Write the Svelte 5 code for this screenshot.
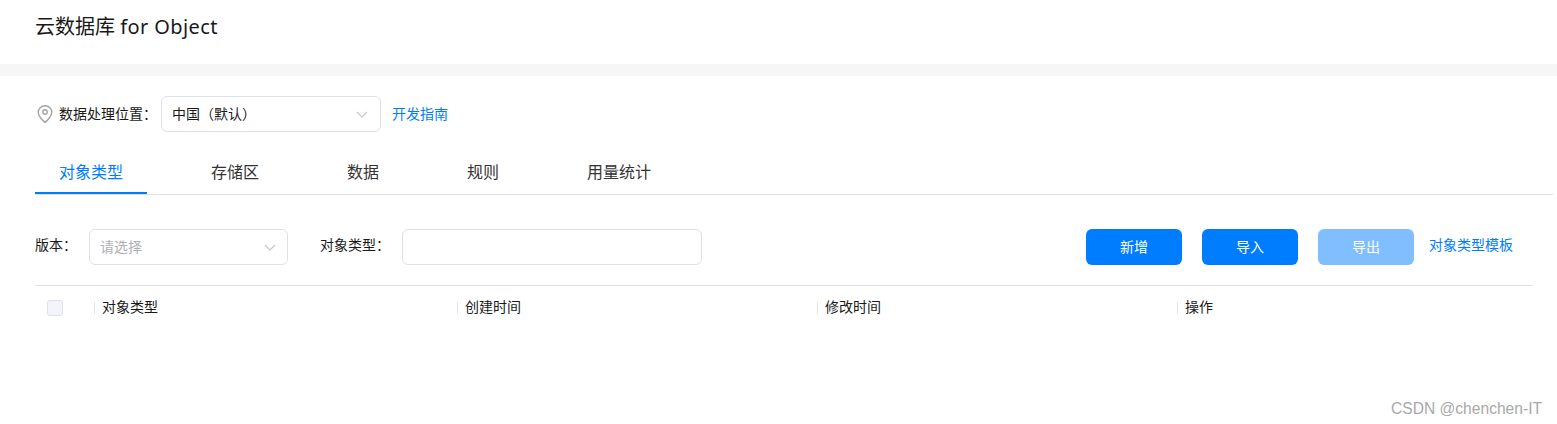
<script>
  const tabs = [
    { name: '对象类型', active: true },
    { name: '存储区' },
    { name: '数据' },
    { name: '规则' },
    { name: '用量统计' }
  ];
  const columns = [
    { name: '对象类型', width: 363 },
    { name: '创建时间', width: 360 },
    { name: '修改时间', width: 360 },
    { name: '操作', width: 300 }
  ];
</script>

<div class="page">
  <header class="title">云数据库 <span class="latin">for Object</span></header>
  <div class="band"></div>

  <div class="location">
    <svg class="pin" width="16" height="18" viewBox="0 0 16 18" fill="none" stroke="#a3a3a3" stroke-width="1.4">
      <path d="M8 .8C4.100.8 1.200 3.600 1.200 7.100c0 2.200 1.100 4.100 2.500 5.900 1.200 1.600 2.900 3.200 4.300 4.400 1.400-1.200 3.100-2.800 4.300-4.400 1.400-1.800 2.500-3.700 2.500-5.900C14.800 3.600 11.900.8 8 .8z" />
      <circle cx="8" cy="7" r="2.200" />
    </svg>
    <span class="loc-label">数据处理位置：</span>
    <div class="select loc-select">
      <span class="value">中国（默认）</span>
      <svg class="chev" width="12" height="7" viewBox="0 0 12 7" fill="none" stroke="#c4c6cc" stroke-width="1.100"><path d="M1 1l5 5 5-5" /></svg>
    </div>
    <a class="link guide" href="#guide">开发指南</a>
  </div>

  <nav class="tabs">
    {#each tabs as tab}
      <div class="tab" class:active={tab.active}>{tab.name}</div>
    {/each}
  </nav>

  <div class="toolbar">
    <span class="field-label">版本：</span>
    <div class="select ver-select">
      <span class="value placeholder">请选择</span>
      <svg class="chev" width="12" height="7" viewBox="0 0 12 7" fill="none" stroke="#c4c6cc" stroke-width="1.100"><path d="M1 1l5 5 5-5" /></svg>
    </div>
    <span class="field-label type-label">对象类型：</span>
    <input class="type-input" type="text" />
    <div class="actions">
      <button class="btn">新增</button>
      <button class="btn">导入</button>
      <button class="btn disabled">导出</button>
      <a class="link template" href="#template">对象类型模板</a>
    </div>
  </div>

  <div class="table-head">
    <span class="check"></span>
    {#each columns as col}
      <div class="col" style="width:{col.width}px">{col.name}</div>
    {/each}
  </div>

  <div class="watermark">CSDN @chenchen-IT</div>
</div>

<style>
  :global(body) { margin: 0; background: #fff; }
  .page {
    position: relative;
    height: 424px;
    overflow: hidden;
    font-family: "Noto Sans", "Noto Sans CJK SC", sans-serif;
    font-size: 14px;
    color: #191919;
  }
  .title { height: 64px; box-sizing: border-box; padding: 12px 0 0 35px; font-size: 20px; line-height: 30px; color: #191919; }
  .latin { letter-spacing: 0.4px; }
  .band { height: 12px; background: #f6f6f6; }

  .location { display: flex; align-items: center; height: 36px; margin-top: 20px; padding-left: 37px; }
  .pin { flex: none; margin-right: 6px; }
  .loc-label { width: 102px; line-height: 20px; white-space: nowrap; }
  .select {
    display: flex; align-items: center; justify-content: space-between; box-sizing: border-box;
    height: 36px; padding: 0 12px 0 10px; border: 1px solid #dfe1e8; border-radius: 6px; background: #fff;
  }
  .value { line-height: 20px; }
  .loc-select { width: 220px; }
  .link { color: #007dff; text-decoration: none; line-height: 20px; white-space: nowrap; }
  .guide { margin-left: 11px; }

  .tabs { display: flex; gap: 40px; height: 44px; margin: 18px 4px 0 35px; border-bottom: 1px solid #dfe1e6; }
  .tab { box-sizing: border-box; height: 44px; padding: 10px 24px 0; line-height: 24px; font-size: 16px; color: #333; }
  .tab.active { color: #007dff; border-bottom: 2px solid #007dff; }

  .toolbar { display: flex; align-items: center; height: 36px; margin-top: 34px; padding: 0 44px 0 35px; }
  .field-label { line-height: 20px; margin-top: -4px; white-space: nowrap; }
  .field-label:first-child { width: 54px; }
  .ver-select { width: 199px; padding-right: 11px; }
  .placeholder { color: #adb0b8; }
  .type-label { width: 82px; margin-left: 32px; }
  .type-input { box-sizing: border-box; width: 300px; height: 36px; padding: 0 10px; border: 1px solid #dfe1e8; border-radius: 6px; outline: none; }
  .actions { display: flex; align-items: center; margin-left: auto; gap: 20px; }
  .btn {
    width: 96px; height: 36px; padding: 0; border: none; border-radius: 6px; background: #007dff; color: #fff;
    font: inherit; line-height: 20px;
  }
  .btn.disabled { background: #80beff; }
  .template { margin-left: -5px; margin-top: -4px; }

  .table-head { display: flex; align-items: center; height: 43px; margin: 20px 24px 0 35px; border-top: 1px solid #dfe1e6; padding-left: 12px; }
  .check { flex: none; box-sizing: border-box; width: 16px; height: 16px; margin-right: 31px; border: 1px solid #dfe1e8; border-radius: 3px; background: #f4f5fa; }
  .col { flex: none; box-sizing: border-box; height: 12px; line-height: 10px; padding-left: 7px; border-left: 1px solid #e4e4e4; white-space: nowrap; }

  .watermark {
    position: absolute; right: 15px; top: 399px; line-height: 20px;
    font-family: "Liberation Sans", sans-serif; font-size: 15.6px; color: #a8a8a8;
  }
</style>
